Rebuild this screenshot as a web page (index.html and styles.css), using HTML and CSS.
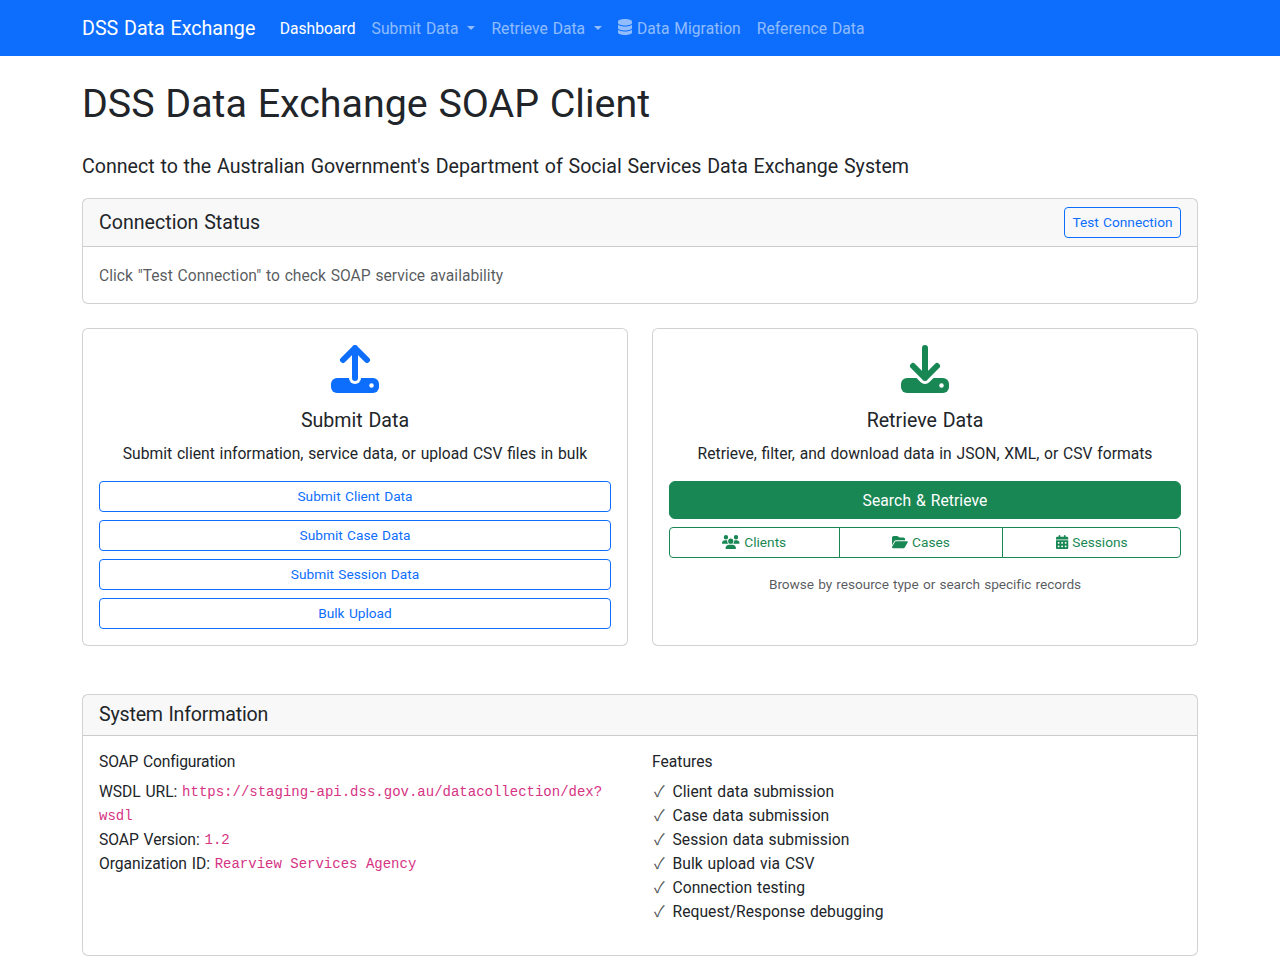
FILE: index.html
```html
<!DOCTYPE html>
<html lang="en">
<head>
<meta charset="utf-8">
<title>DSS Data Exchange</title>
<link rel="stylesheet" href="styles.css">
</head>
<body>
<nav class="navbar">
  <div class="container navbar-inner">
    <a class="brand">DSS Data Exchange</a>
    <ul class="nav">
      <li class="nav-link active">Dashboard</li>
      <li class="nav-link caret">Submit Data </li>
      <li class="nav-link caret">Retrieve Data </li>
      <li class="nav-link"><svg class="icon database" viewBox="0 0 448 512"><path d="M448 80v48c0 44.2-100.3 80-224 80S0 172.2 0 128V80C0 35.800 100.300 0 224 0S448 35.800 448 80zM393.200 214.700c20.800-7.400 39.900-16.900 54.800-28.600V288c0 44.200-100.300 80-224 80S0 332.200 0 288V186.100c14.900 11.800 34 21.200 54.800 28.600C99.700 230.700 159.500 240 224 240s124.300-9.300 169.200-25.300zM0 346.100c14.900 11.800 34 21.200 54.800 28.600C99.700 390.700 159.500 400 224 400s124.300-9.300 169.200-25.300c20.800-7.400 39.900-16.900 54.800-28.600V432c0 44.200-100.300 80-224 80S0 476.200 0 432V346.100z"/></svg> Data Migration</li>
      <li class="nav-link">Reference Data</li>
    </ul>
  </div>
</nav>
<main class="container">
  <h1>DSS Data Exchange SOAP Client</h1>
  <p class="lead">Connect to the Australian Government's Department of Social Services Data Exchange System</p>

  <section class="card status">
    <div class="card-header">
      <h5>Connection Status</h5>
      <button class="btn btn-sm outline-primary">Test Connection</button>
    </div>
    <div class="card-body muted"><p class="text">Click "Test Connection" to check SOAP service availability</p></div>
  </section>

  <div class="row actions">
    <section class="card card-body center">
      <svg class="big-icon primary" viewBox="0 0 48 48">
        <mask id="up"><rect width="48" height="48" fill="#fff"/><path d="M24 20V33" stroke="#000" stroke-width="12" stroke-linecap="round"/><circle cx="40.500" cy="40.500" r="2.250" fill="#000"/></mask>
        <rect y="33" width="48" height="15" rx="6" fill="currentColor" mask="url(#up)"/>
        <path class="arrow" d="M24 33V3M12 15L24 3l12 12"/>
      </svg>
      <h5>Submit Data</h5>
      <p class="text gap">Submit client information, service data, or upload CSV files in bulk</p>
      <div class="stack">
        <button class="btn btn-sm outline-primary">Submit Client Data</button>
        <button class="btn btn-sm outline-primary">Submit Case Data</button>
        <button class="btn btn-sm outline-primary">Submit Session Data</button>
        <button class="btn btn-sm outline-primary">Bulk Upload</button>
      </div>
    </section>
    <section class="card card-body center">
      <svg class="big-icon success" viewBox="0 0 48 48">
        <mask id="down"><rect width="48" height="48" fill="#fff"/><path d="M12 21l12 12 12-12" fill="none" stroke="#000" stroke-width="12" stroke-linecap="round" stroke-linejoin="round"/><circle cx="40.500" cy="40.500" r="2.250" fill="#000"/></mask>
        <rect y="33" width="48" height="15" rx="6" fill="currentColor" mask="url(#down)"/>
        <path class="arrow" d="M24 3v30M12 21l12 12 12-12"/>
      </svg>
      <h5>Retrieve Data</h5>
      <p class="text gap">Retrieve, filter, and download data in JSON, XML, or CSV formats</p>
      <div class="stack">
        <button class="btn solid-success">Search &amp; Retrieve</button>
        <div class="btn-group">
          <button class="btn btn-sm outline-success"><svg class="icon users" viewBox="0 0 640 512"><path d="M144 0a80 80 0 1 1 0 160A80 80 0 1 1 144 0zM512 0a80 80 0 1 1 0 160A80 80 0 1 1 512 0zM0 298.700C0 239.800 47.800 192 106.700 192h42.700c15.900 0 31 3.500 44.600 9.700c-1.300 7.200-1.900 14.700-1.900 22.300c0 38.200 16.800 72.500 43.300 96H21.300C9.600 320 0 310.400 0 298.700zM405.300 320h-.700c26.600-23.500 43.300-57.800 43.300-96c0-7.600-.700-15-1.900-22.300c13.600-6.300 28.700-9.700 44.600-9.700h42.700C592.200 192 640 239.800 640 298.700c0 11.800-9.600 21.300-21.300 21.300H405.300zM224 224a96 96 0 1 1 192 0 96 96 0 1 1-192 0zM128 485.300C128 411.700 187.700 352 261.300 352H378.700C452.300 352 512 411.700 512 485.300c0 14.700-11.900 26.700-26.700 26.700H154.700c-14.700 0-26.700-11.900-26.700-26.700z"/></svg> Clients</button>
          <button class="btn btn-sm outline-success"><svg class="icon folder" viewBox="0 0 576 512"><path d="M88.700 223.800L0 375.800V96C0 60.700 28.700 32 64 32H181.500c17 0 33.300 6.700 45.300 18.700l26.500 26.500c12 12 28.300 18.700 45.300 18.700H416c35.300 0 64 28.700 64 64v32H144c-22.800 0-43.800 12.100-55.300 31.800zm27.600 16.100C122.100 230 132.600 224 144 224H544c11.500 0 22 6.100 27.700 16.100s5.700 22.200-.1 32.100l-112 192C453.900 474 443.400 480 432 480H32c-11.500 0-22-6.100-27.700-16.100s-5.700-22.200.1-32.100l112-192z"/></svg> Cases</button>
          <button class="btn btn-sm outline-success"><svg class="icon calendar" viewBox="0 0 448 512"><path fill-rule="evenodd" d="M128 0c17.700 0 32 14.300 32 32V64H288V32c0-17.700 14.300-32 32-32s32 14.300 32 32V64h48c26.500 0 48 21.500 48 48v48H0V112C0 85.500 21.500 64 48 64H96V32c0-17.700 14.300-32 32-32zM0 192H448V464c0 26.500-21.500 48-48 48H48c-26.500 0-48-21.500-48-48V192zM80 256h32q16 0 16 16v32q0 16-16 16H80q-16 0-16-16v-32q0-16 16-16zM208 256h32q16 0 16 16v32q0 16-16 16h-32q-16 0-16-16v-32q0-16 16-16zM336 256h32q16 0 16 16v32q0 16-16 16h-32q-16 0-16-16v-32q0-16 16-16zM80 384h32q16 0 16 16v32q0 16-16 16H80q-16 0-16-16v-32q0-16 16-16zM208 384h32q16 0 16 16v32q0 16-16 16h-32q-16 0-16-16v-32q0-16 16-16zM336 384h32q16 0 16 16v32q0 16-16 16h-32q-16 0-16-16v-32q0-16 16-16z"/></svg> Sessions</button>
        </div>
      </div>
      <small class="muted hint">Browse by resource type or search specific records</small>
    </section>
  </div>

  <section class="card">
    <div class="card-header"><h5 class="tight">System Information</h5></div>
    <div class="card-body row">
      <div>
        <h6 class="tight">SOAP Configuration</h6>
        <p class="text config">WSDL URL: <code>https://staging-api.dss.gov.au/datacollection/dex?<wbr>wsdl</code><br>SOAP Version: <code>1.2</code><br>Organization ID: <code>Rearview Services Agency</code></p>
      </div>
      <div>
        <h6>Features</h6>
        <ul class="text gap features">
          <li><span class="tick">✓</span>Client data submission</li>
          <li><span class="tick">✓</span>Case data submission</li>
          <li><span class="tick">✓</span>Session data submission</li>
          <li><span class="tick">✓</span>Bulk upload via CSV</li>
          <li><span class="tick">✓</span>Connection testing</li>
          <li><span class="tick">✓</span>Request/Response debugging</li>
        </ul>
      </div>
    </div>
  </section>
</main>
</body>
</html>
```
FILE: styles.css
```css
*, *::before, *::after { box-sizing: border-box; }
body {
  margin: 0;
  font: 400 15.65px/24px Roboto, "Liberation Sans", sans-serif;
  word-spacing: .06em;
  color: #212529;
  background: #fff;
}
h1, h5, h6, p, ul { margin: 0; padding: 0; font-weight: 400; }
ul { list-style: none; }
.container { width: 1116px; margin: 0 auto; }
.navbar { background: #0d6efd; height: 56px; color: #fff; }
.navbar-inner { display: flex; align-items: center; height: 100%; }
.brand { width: 173.7px; font-size: 19.65px; line-height: 29px; margin-right: 16px; white-space: nowrap; }
.nav { display: flex; }
.nav-link { padding: 8px; line-height: 25px; letter-spacing: .03px; color: rgba(255, 255, 255, .55); white-space: nowrap; }
.nav-link.active { color: #fff; }
.caret::after {
  content: "";
  display: inline-block;
  margin-left: 4.08px;
  vertical-align: 3.08px;
  border-top: 4.8px solid;
  border-left: 4.8px solid transparent;
  border-right: 4.8px solid transparent;
}
.icon { height: 16px; display: inline-block; vertical-align: -1px; fill: currentColor; overflow: visible; }
.btn-sm .icon { height: 14px; vertical-align: -1.75px; }
.database { width: 14px; }
.users { width: 17.5px; }
.folder { width: 15.75px; }
.calendar { width: 12.25px; }
h1 { font-size: 39.4px; line-height: 48px; margin: 24px 0; }
.lead { font-size: 19.6px; line-height: 30px; margin-bottom: 16px; }
h5 { font-size: 19.6px; line-height: 24px; }
h6 { font-size: 15.65px; line-height: 19.2px; margin-bottom: 8px; }
.card { border: 1px solid rgba(0, 0, 0, .176); border-radius: 6px; background: #fff; }
.card-header {
  display: flex;
  justify-content: space-between;
  align-items: center;
  padding: 8px 16px;
  background: rgba(33, 37, 41, .03);
  border-bottom: 1px solid rgba(0, 0, 0, .176);
}
.card-body { padding: 16px; }
.muted { color: rgba(33, 37, 41, .75); }
.status { margin-bottom: 24px; }
.row { display: grid; grid-template-columns: 1fr 1fr; column-gap: 24px; }
.actions { margin-bottom: 48px; }
.center { text-align: center; }
.big-icon { display: block; width: 48px; height: 48px; margin: 0 auto 16px; }
.arrow { fill: none; stroke: currentColor; stroke-width: 6; stroke-linecap: round; stroke-linejoin: round; }
.primary { color: #0d6efd; }
.success { color: #198754; }
.center h5 { margin-bottom: 8px; }
.text { padding-top: 1px; margin-bottom: -1px; }
.gap { margin-bottom: 15px; }
.stack { display: grid; gap: 8px; }
.btn {
  font: inherit;
  letter-spacing: inherit;
  word-spacing: inherit;
  line-height: 24px;
  padding: 6px 12px;
  border: 1px solid;
  border-radius: 6px;
  background: #fff;
}
.btn-sm { font-size: 13.7px; line-height: 21px; padding: 4px 8px; border-radius: 4px; }
.outline-primary { color: #0d6efd; border-color: #0d6efd; }
.card-header .outline-primary { width: 117px; padding-inline: 0; background: transparent; }
.outline-success { color: #198754; border-color: #198754; }
.solid-success { padding: 7px 12px 5px; letter-spacing: .08px; color: #fff; background: #198754; border-color: #198754; }
.btn-group { display: flex; }
.btn-group .btn { flex: 1 1 auto; border-radius: 0; }
.btn-group .btn + .btn { margin-left: -1px; }
.btn-group .btn:first-child { border-radius: 4px 0 0 4px; }
.btn-group .btn:last-child { border-radius: 0 4px 4px 0; }
.hint { display: block; margin-top: 16px; font-size: 13.7px; line-height: 21px; letter-spacing: -.08px; }
.tight { letter-spacing: -.01em; }
.config { letter-spacing: -.04px; }
code { font: 14px/1 "Liberation Mono", monospace; vertical-align: 1px; color: #d63384; letter-spacing: 0; word-spacing: 0; }
.features { letter-spacing: .03px; }
.tick { display: inline-block; width: 18.5px; margin-left: 2px; line-height: 1; color: #4b4f53; font-family: "Noto Sans CJK JP", sans-serif; }
```
